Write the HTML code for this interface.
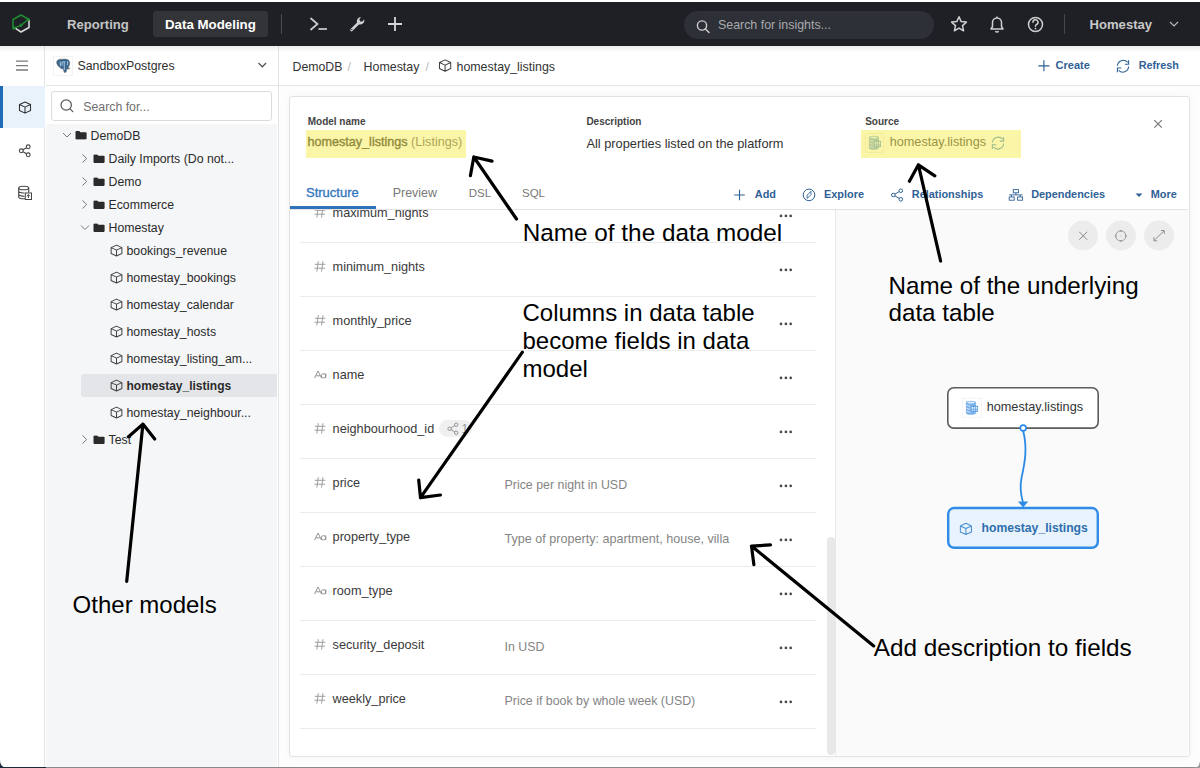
<!DOCTYPE html>
<html><head><meta charset="utf-8">
<style>
*{box-sizing:border-box;margin:0;padding:0}
html,body{width:1200px;height:768px;overflow:hidden;background:#fff;font-family:"Liberation Sans",sans-serif;color:#333;position:relative}
.a{position:absolute}
.t{position:absolute;white-space:nowrap;line-height:1}
svg{position:absolute;overflow:visible}
.b{font-weight:bold}
</style></head><body>
<svg style="left:0;top:0;width:0;height:0"><defs>
<symbol id="cube" viewBox="0 0 14 14"><path d="M7 1.2 L12.8 3.9 L12.8 10.2 L7 12.9 L1.2 10.2 L1.2 3.9 Z M1.2 3.9 L7 6.6 L12.8 3.9 M7 6.6 L7 12.9" fill="none" stroke="currentColor" stroke-width="1.1" stroke-linejoin="round"/></symbol>
<symbol id="folder" viewBox="0 0 12 9"><path d="M0.5 1.2 Q0.5 0.3 1.4 0.3 L4.3 0.3 L5.4 1.5 L10.8 1.5 Q11.6 1.5 11.6 2.3 L11.6 7.9 Q11.6 8.7 10.8 8.7 L1.3 8.7 Q0.5 8.7 0.5 7.9 Z" fill="#2b2b2b"/></symbol>
<symbol id="dbi" viewBox="0 0 20 20">
<path d="M3.9 4.4 Q3.9 2.7 8.9 2.7 Q13.9 2.7 13.9 4.4 L13.9 15 Q13.9 16.8 8.9 16.8 Q3.9 16.8 3.9 15 Z" fill="currentColor" opacity="0.8"/>
<ellipse cx="8.9" cy="4.5" rx="3.7" ry="1.05" fill="#fff" opacity="0.75"/>
<path d="M4.3 7.2 Q5.5 8.3 8.9 8.3 M4.3 10.1 Q5.5 11.2 8.6 11.2 M4.3 13 Q5.5 14.1 8.6 14.1" stroke="#fff" stroke-width="0.8" fill="none" opacity="0.8"/>
<rect x="8.6" y="7.8" width="7.4" height="6.2" fill="currentColor"/>
<g fill="#fff" opacity="0.9"><rect x="9.6" y="8.9" width="1.4" height="1.9"/><rect x="11.7" y="8.9" width="1.4" height="1.9"/><rect x="13.8" y="8.9" width="1.4" height="1.9"/>
<rect x="9.6" y="11.4" width="1.4" height="1.8" opacity="0.7"/><rect x="11.7" y="11.4" width="1.4" height="1.8" opacity="0.7"/><rect x="13.8" y="11.4" width="1.4" height="1.8" opacity="0.7"/></g>
</symbol>
</defs></svg>
<div class="a" style="left:0;top:2px;width:1200px;height:44px;background:#1e2025"></div>
<div class="a" style="left:153px;top:11px;width:115px;height:26px;background:#333437;border-radius:3px"></div>
<div class="t b" style="left:67px;top:18.00px;font-size:13.1px;color:#c4c4c4;">Reporting</div>
<div class="t b" style="left:165px;top:18.00px;font-size:13.3px;color:#fff;">Data Modeling</div>
<div class="t b" style="left:1089.5px;top:18.00px;font-size:13.1px;color:#c8c8c8;">Homestay</div>
<div class="a" style="left:281px;top:14px;width:1px;height:20px;background:#4a4c50"></div>
<svg style="left:0;top:0" width="45" height="46" viewBox="0 0 45 46">
<path d="M15.5 28 L13 26.5 L13 19.5 L21 15 L28.5 19.3" fill="none" stroke="#1f8a32" stroke-width="1.6" stroke-linejoin="round"/>
<path d="M15.5 28.3 L21 32 L29 27.5 L29 20" fill="none" stroke="#d8d8d8" stroke-width="1.6" stroke-linejoin="round"/>
<path d="M13.3 28.3 L21 25.3 L28.5 19.2" fill="none" stroke="#1f8a32" stroke-width="1.4"/>
<circle cx="13.5" cy="28.3" r="1.4" fill="#1f8a32"/><circle cx="21" cy="25.3" r="1.2" fill="none" stroke="#1f8a32" stroke-width="1"/><circle cx="28.3" cy="19.3" r="1.5" fill="#1f8a32"/>
</svg>
<svg style="left:0;top:0" width="1200" height="46">
<path d="M311 18.5 L317.5 24 L311 29.5" fill="none" stroke="#cfcfcf" stroke-width="1.7" stroke-linecap="round"/>
<path d="M318.5 29 L327 29" stroke="#cfcfcf" stroke-width="1.7"/>
<path d="M351.5 30 L358.5 23" stroke="#cfcfcf" stroke-width="2.6" stroke-linecap="round"/>
<path d="M357 22.5 A4.3 4.3 0 0 1 361 17 L359.3 19.6 L360.3 21.5 L362.4 21.6 L364.2 19.2 A4.3 4.3 0 0 1 358.6 24.3 Z" fill="#cfcfcf"/>
<circle cx="351.8" cy="29.6" r="0.7" fill="#1e2025"/>
<path d="M395 17 L395 31 M388 24 L402 24" stroke="#d6d6d6" stroke-width="1.8"/>
<rect x="684" y="11" width="250" height="28" rx="14" fill="#2d3037"/>
<circle cx="702" cy="25.5" r="4.6" fill="none" stroke="#d0d0d0" stroke-width="1.4"/>
<path d="M705.3 28.8 L709 32.5" stroke="#d0d0d0" stroke-width="1.4" stroke-linecap="round"/>
<path d="M959 16.8 L961.2 21.6 L966.4 22.1 L962.5 25.6 L963.6 30.8 L959 28.1 L954.4 30.8 L955.5 25.6 L951.6 22.1 L956.8 21.6 Z" fill="none" stroke="#cfcfcf" stroke-width="1.5" stroke-linejoin="round"/>
<path d="M991 29 L1003 29 L1001.5 26.5 L1001.5 22.5 A4.5 4.5 0 0 0 992.5 22.5 L992.5 26.5 Z" fill="none" stroke="#cfcfcf" stroke-width="1.5" stroke-linejoin="round"/>
<path d="M995.5 31 A1.6 1.6 0 0 0 998.5 31" fill="none" stroke="#cfcfcf" stroke-width="1.4"/>
<path d="M997 16.5 L997 18" stroke="#cfcfcf" stroke-width="1.4"/>
<circle cx="1035.5" cy="24.5" r="7" fill="none" stroke="#cfcfcf" stroke-width="1.5"/>
<path d="M1033 22.3 A2.5 2.5 0 1 1 1036.3 24.6 Q1035.5 25.2 1035.5 26.3" fill="none" stroke="#cfcfcf" stroke-width="1.5" stroke-linecap="round"/>
<circle cx="1035.5" cy="28.6" r="0.9" fill="#cfcfcf"/>
<path d="M1064.5 14 L1064.5 34" stroke="#44474c" stroke-width="1"/>
<path d="M1170 22 L1174 26 L1178 22" fill="none" stroke="#bdbdbd" stroke-width="1.1"/>
</svg>
<div class="t" style="left:718px;top:19.00px;font-size:12.4px;color:#a9abae;">Search for insights...</div>
<div class="a" style="left:0;top:46px;width:45px;height:721px;background:#fff;border-right:1px solid #e3e3e3"></div>
<div class="a" style="left:0;top:86px;width:45px;height:42px;background:#e9f1fb"></div>
<div class="a" style="left:0;top:86px;width:3px;height:42px;background:#1e6bb8"></div>
<svg style="left:0;top:0" width="45" height="210">
<path d="M16 61.2 L28 61.2 M16 65.6 L28 65.6 M16 70 L28 70" stroke="#7a7a7a" stroke-width="1.3"/>
<use href="#cube" x="18.3" y="100.8" width="13.4" height="13.4" color="#333"/>
<circle cx="28.2" cy="146.8" r="1.9" fill="none" stroke="#444" stroke-width="1.1"/>
<circle cx="21.3" cy="150.8" r="1.9" fill="none" stroke="#444" stroke-width="1.1"/>
<circle cx="28.2" cy="154.8" r="1.9" fill="none" stroke="#444" stroke-width="1.1"/>
<path d="M23 149.8 L26.5 147.8 M23 151.8 L26.5 153.8" stroke="#444" stroke-width="1.1"/>
<ellipse cx="23.7" cy="188" rx="5" ry="1.8" fill="none" stroke="#444" stroke-width="1.1"/>
<path d="M18.7 188 L18.7 197 Q18.7 198.8 23.7 198.8 L25 198.8 M28.7 188 L28.7 192.5 M18.7 191.2 Q19.5 193 24.5 193 M18.7 194.5 Q19.5 196.2 24.5 196.2" fill="none" stroke="#444" stroke-width="1.1"/>
<rect x="25.3" y="193" width="6.2" height="6.5" fill="#fff" stroke="#444" stroke-width="1"/>
<path d="M28.4 198 L28.4 194.8 M27 196.2 L28.4 194.6 L29.8 196.2" fill="none" stroke="#444" stroke-width="1"/>
</svg>
<div class="a" style="left:45px;top:46px;width:234px;height:721px;background:#fff;border-right:1px solid #e3e3e3"></div>
<div class="a" style="left:46px;top:85px;width:232px;height:1px;background:#e6e6e6"></div>
<div class="a" style="left:51px;top:91px;width:221px;height:30px;border:1px solid #dcdcdc;border-radius:3px;background:#fff"></div>
<div class="a" style="left:46px;top:124px;width:231px;height:643px;background:#f5f6f8"></div>
<div class="a" style="left:53px;top:56px;width:20px;height:20px;border:1px solid #f3f3f3;background:#fff"></div>
<svg style="left:53px;top:56px" width="20" height="20" viewBox="0 0 20 20">
<path d="M5 4 Q6.5 2.8 9.5 3.3 Q12.5 2.6 15.5 4 Q17.3 5.5 16.5 8.5 Q16 10.5 15 11.5 L16.8 12.3 Q15.5 13.5 13.8 12.8 Q13.8 15.5 12.5 16.5 Q11 17 10.8 15 L10.3 13 Q8 13 7 11.5 Q5 10.5 4 8 Q3 5 5 4 Z" fill="#336791" stroke="#6a6a6a" stroke-width="0.6"/>
<path d="M7.2 5.5 L7.6 10.3 M9 6 L9.2 9.5 M9.3 6 Q11 5.6 12.5 6.2 M11.2 6.2 L11.3 14 M14.6 5.2 Q15 7.5 14.2 9.2" stroke="#dfe9f3" stroke-width="0.75" fill="none"/>
</svg>
<div class="t" style="left:77.5px;top:60.00px;font-size:12.3px;color:#2e2e2e;">SandboxPostgres</div>
<div class="t" style="left:83.3px;top:101.00px;font-size:12.3px;color:#6e6e6e;">Search for...</div>
<svg style="left:0;top:0" width="280" height="130">
<path d="M258.5 63 L262.3 66.8 L266.1 63" fill="none" stroke="#555" stroke-width="1.3"/>
<circle cx="66.2" cy="105" r="5.2" fill="none" stroke="#555" stroke-width="1.2"/>
<path d="M70 108.8 L72.8 111.6" stroke="#555" stroke-width="1.2" stroke-linecap="round"/>
</svg>
<div class="a" style="left:81px;top:374px;width:196px;height:23px;background:#e4e5e9;border-radius:3px 0 0 3px"></div>
<div class="t" style="left:90.5px;top:130.00px;font-size:12.3px;color:#2b2b2b;">DemoDB</div>
<div class="t" style="left:108.5px;top:153.00px;font-size:12.3px;color:#2b2b2b;">Daily Imports (Do not...</div>
<div class="t" style="left:108.5px;top:176.00px;font-size:12.3px;color:#2b2b2b;">Demo</div>
<div class="t" style="left:108.5px;top:199.00px;font-size:12.3px;color:#2b2b2b;">Ecommerce</div>
<div class="t" style="left:108.5px;top:222.00px;font-size:12.3px;color:#2b2b2b;">Homestay</div>
<div class="t" style="left:108.5px;top:434.00px;font-size:12.3px;color:#2b2b2b;">Test</div>
<div class="t" style="left:126.5px;top:245.00px;font-size:12.3px;color:#2b2b2b;">bookings_revenue</div>
<div class="t" style="left:126.5px;top:272.00px;font-size:12.3px;color:#2b2b2b;">homestay_bookings</div>
<div class="t" style="left:126.5px;top:299.00px;font-size:12.3px;color:#2b2b2b;">homestay_calendar</div>
<div class="t" style="left:126.5px;top:326.00px;font-size:12.3px;color:#2b2b2b;">homestay_hosts</div>
<div class="t" style="left:126.5px;top:353.00px;font-size:12.3px;color:#2b2b2b;">homestay_listing_am...</div>
<div class="t" style="left:126.5px;top:380.00px;font-size:12px;color:#2b2b2b;font-weight:bold">homestay_listings</div>
<div class="t" style="left:126.5px;top:407.00px;font-size:12.3px;color:#2b2b2b;">homestay_neighbour...</div>
<svg style="left:0;top:0" width="280" height="460">
<path d="M63 133 L67 137 L71 133" fill="none" stroke="#777" stroke-width="1"/>
<use href="#folder" x="75" y="130.7" width="12" height="9"/>
<path d="M82.5 154.5 L86.7 158.5 L82.5 162.5" fill="none" stroke="#777" stroke-width="1"/>
<use href="#folder" x="93" y="154.2" width="12" height="9"/>
<path d="M82.5 177.5 L86.7 181.5 L82.5 185.5" fill="none" stroke="#777" stroke-width="1"/>
<use href="#folder" x="93" y="177.2" width="12" height="9"/>
<path d="M82.5 200.5 L86.7 204.5 L82.5 208.5" fill="none" stroke="#777" stroke-width="1"/>
<use href="#folder" x="93" y="200.2" width="12" height="9"/>
<path d="M81 225.5 L85 229.5 L89 225.5" fill="none" stroke="#777" stroke-width="1"/>
<use href="#folder" x="93" y="223.2" width="12" height="9"/>
<path d="M82.5 435.5 L86.7 439.5 L82.5 443.5" fill="none" stroke="#777" stroke-width="1"/>
<use href="#folder" x="93" y="435.2" width="12" height="9"/>
<use href="#cube" x="110" y="244.0" width="13" height="13" color="#444"/>
<use href="#cube" x="110" y="271.0" width="13" height="13" color="#444"/>
<use href="#cube" x="110" y="298.0" width="13" height="13" color="#444"/>
<use href="#cube" x="110" y="325.0" width="13" height="13" color="#444"/>
<use href="#cube" x="110" y="352.0" width="13" height="13" color="#444"/>
<use href="#cube" x="110" y="379.0" width="13" height="13" color="#444"/>
<use href="#cube" x="110" y="406.0" width="13" height="13" color="#444"/>
</svg>
<div class="a" style="left:279px;top:46px;width:921px;height:721px;background:#fdfdfd"></div>
<div class="a" style="left:279px;top:46px;width:921px;height:40px;background:#fff;border-bottom:1px solid #e6e6e6"></div>
<div class="a" style="left:289px;top:96px;width:901px;height:661px;background:#fff;border:1px solid #e3e3e3;border-radius:3px;box-shadow:0 0 8px rgba(0,0,0,.035)"></div>
<div class="t" style="left:292.5px;top:61.00px;font-size:12.3px;color:#333;">DemoDB</div>
<div class="t" style="left:347.5px;top:61.00px;font-size:12.4px;color:#bbb;">/</div>
<div class="t" style="left:363.6px;top:61.00px;font-size:12.4px;color:#333;">Homestay</div>
<div class="t" style="left:425.5px;top:61.00px;font-size:12.4px;color:#bbb;">/</div>
<div class="t" style="left:456.5px;top:61.00px;font-size:12.4px;color:#333;">homestay_listings</div>
<div class="t b" style="left:1055.6px;top:60.00px;font-size:11px;color:#2f6196;">Create</div>
<div class="t b" style="left:1138.7px;top:60.00px;font-size:10.8px;color:#2f6196;">Refresh</div>
<svg style="left:0;top:0" width="1200" height="90">
<use href="#cube" x="438.3" y="58.7" width="13.6" height="13.6" color="#444"/>
<path d="M1043.9 60.3 L1043.9 71.3 M1038.3 65.8 L1049.5 65.8" stroke="#2f6196" stroke-width="1.15"/>
<path d="M1117.4 65.8 A5.8 5.8 0 0 1 1127.6 62.4 M1128.6 66.6 A5.8 5.8 0 0 1 1118.6 70.4" fill="none" stroke="#2f6196" stroke-width="1.1"/>
<path d="M1128.6 60.2 L1128.6 64.3 L1124.8 64.3 M1117.4 72.2 L1117.4 68 L1121.3 68" fill="none" stroke="#2f6196" stroke-width="1.1"/>
</svg>
<div class="t b" style="left:307.7px;top:117.00px;font-size:10px;color:#444;">Model name</div>
<div class="t b" style="left:586.4px;top:117.00px;font-size:10px;color:#444;">Description</div>
<div class="t b" style="left:865.2px;top:117.00px;font-size:10px;color:#444;">Source</div>
<div class="t" style="left:307.5px;top:136.00px;font-size:12.6px;color:#333;"><span style="-webkit-text-stroke:0.4px #333">homestay_listings</span> <span style="color:#666">(Listings)</span></div>
<div class="t" style="left:586.4px;top:138.00px;font-size:12.8px;color:#333;">All properties listed on the platform</div>
<div class="a" style="left:865px;top:133px;width:19px;height:20px;border:1px solid #eee;border-radius:2px;background:#fff"></div>
<div class="t" style="left:889.7px;top:136.00px;font-size:12.7px;color:#444;">homestay.listings</div>
<svg style="left:0;top:0" width="1200" height="220">
<use href="#dbi" x="865" y="133" width="20" height="20" color="#5a9ad8"/>
<path d="M992.4 142.6 A5.8 5.8 0 0 1 1002.6 139.2 M1003.6 143.4 A5.8 5.8 0 0 1 993.6 147.2" fill="none" stroke="#4a92c8" stroke-width="1.1"/>
<path d="M1003.6 137 L1003.6 141.1 L999.8 141.1 M992.4 149 L992.4 144.8 L996.3 144.8" fill="none" stroke="#4a92c8" stroke-width="1.1"/>
<path d="M1154.3 120.2 L1161.8 127.7 M1161.8 120.2 L1154.3 127.7" stroke="#777" stroke-width="1.2"/>
</svg>
<div class="a" style="left:290px;top:209px;width:898px;height:1px;background:#e4e4e4"></div>
<div class="a" style="left:290px;top:206px;width:86px;height:3px;background:#2f72b9"></div>
<div class="t" style="left:306px;top:186.00px;font-size:13px;color:#3577bf;-webkit-text-stroke:0.35px #3577bf">Structure</div>
<div class="t" style="left:392.8px;top:187.00px;font-size:12.4px;color:#777;">Preview</div>
<div class="t" style="left:468.7px;top:188.00px;font-size:11.5px;color:#777;">DSL</div>
<div class="t" style="left:522px;top:188.00px;font-size:11.5px;color:#777;">SQL</div>
<div class="t b" style="left:754.8px;top:189.00px;font-size:10.9px;color:#2f6196;">Add</div>
<div class="t b" style="left:824px;top:189.00px;font-size:10.9px;color:#2f6196;">Explore</div>
<div class="t b" style="left:911.8px;top:189.00px;font-size:10.9px;color:#2f6196;">Relationships</div>
<div class="t b" style="left:1031.2px;top:189.00px;font-size:10.9px;color:#2f6196;">Dependencies</div>
<div class="t b" style="left:1150.8px;top:189.00px;font-size:10.9px;color:#2f6196;">More</div>
<svg style="left:0;top:0" width="1200" height="220">
<path d="M739.5 189.8 L739.5 200.3 M734.2 195 L744.8 195" stroke="#2f6196" stroke-width="1.1"/>
<circle cx="809" cy="194.9" r="5.8" fill="none" stroke="#2f6196" stroke-width="1"/>
<path d="M810.9 191.3 L811 194.6 L807.3 198.4 L807.1 195.2 Z" fill="none" stroke="#2f6196" stroke-width="0.9" stroke-linejoin="round"/>
<circle cx="900.8" cy="190.7" r="1.8" fill="none" stroke="#2f6196" stroke-width="1"/>
<circle cx="893.3" cy="195" r="1.8" fill="none" stroke="#2f6196" stroke-width="1"/>
<circle cx="900.8" cy="199.3" r="1.8" fill="none" stroke="#2f6196" stroke-width="1"/>
<path d="M895 194 L899 191.8 M895 196 L899 198.2" stroke="#2f6196" stroke-width="1"/>
<g fill="none" stroke="#2f6196" stroke-width="0.9">
<rect x="1013.3" y="189.6" width="5.2" height="3.2"/>
<path d="M1015.9 192.8 L1015.9 194.9 M1009 194.9 L1022.6 194.9 M1011.5 194.9 L1011.5 197 M1020.2 194.9 L1020.2 197"/>
<rect x="1009.2" y="197" width="5" height="3.2"/><rect x="1017.6" y="197" width="5" height="3.2"/>
</g>
<path d="M1135.5 193.5 L1142.5 193.5 L1139 197 Z" fill="#2f6196"/>
</svg>
<div class="a" style="left:0;top:210px;width:1200px;height:546px;overflow:hidden"><div class="a" style="left:0;top:-210px;width:1200px;height:768px">
<div class="a" style="left:300px;top:242px;width:516px;height:1px;background:#ebebeb"></div>
<div class="t" style="left:332.6px;top:207.00px;font-size:12.7px;color:#3a3a3a;">maximum_nights</div>
<div class="a" style="left:300px;top:296px;width:516px;height:1px;background:#ebebeb"></div>
<div class="t" style="left:332.6px;top:261.00px;font-size:12.7px;color:#3a3a3a;">minimum_nights</div>
<div class="a" style="left:300px;top:350px;width:516px;height:1px;background:#ebebeb"></div>
<div class="t" style="left:332.6px;top:315.00px;font-size:12.7px;color:#3a3a3a;">monthly_price</div>
<div class="a" style="left:300px;top:404px;width:516px;height:1px;background:#ebebeb"></div>
<div class="t" style="left:332.6px;top:369.00px;font-size:12.7px;color:#3a3a3a;">name</div>
<div class="a" style="left:300px;top:458px;width:516px;height:1px;background:#ebebeb"></div>
<div class="t" style="left:332.6px;top:423.00px;font-size:12.7px;color:#3a3a3a;">neighbourhood_id</div>
<div class="a" style="left:300px;top:512px;width:516px;height:1px;background:#ebebeb"></div>
<div class="t" style="left:332.6px;top:477.00px;font-size:12.7px;color:#3a3a3a;">price</div>
<div class="t" style="left:504.5px;top:479.00px;font-size:12.4px;color:#858585;">Price per night in USD</div>
<div class="a" style="left:300px;top:566px;width:516px;height:1px;background:#ebebeb"></div>
<div class="t" style="left:332.6px;top:531.00px;font-size:12.7px;color:#3a3a3a;">property_type</div>
<div class="t" style="left:504.5px;top:533.00px;font-size:12.6px;color:#858585;">Type of property: apartment, house, villa</div>
<div class="a" style="left:300px;top:620px;width:516px;height:1px;background:#ebebeb"></div>
<div class="t" style="left:332.6px;top:585.00px;font-size:12.7px;color:#3a3a3a;">room_type</div>
<div class="a" style="left:300px;top:674px;width:516px;height:1px;background:#ebebeb"></div>
<div class="t" style="left:332.6px;top:639.00px;font-size:12.7px;color:#3a3a3a;">security_deposit</div>
<div class="t" style="left:504.5px;top:641.00px;font-size:12.4px;color:#858585;">In USD</div>
<div class="a" style="left:300px;top:728px;width:516px;height:1px;background:#ebebeb"></div>
<div class="t" style="left:332.6px;top:693.00px;font-size:12.7px;color:#3a3a3a;">weekly_price</div>
<div class="t" style="left:504.5px;top:695.00px;font-size:12.4px;color:#858585;">Price if book by whole week (USD)</div>
<div class="a" style="left:439.3px;top:420.2px;width:33.2px;height:17.3px;background:#f0f0f0;border-radius:8.6px"></div>
<div class="t" style="left:461.5px;top:423.00px;font-size:12px;color:#999;">1</div>
<svg style="left:0;top:0" width="1200" height="768">
<path d="M318.3 207.20000000000002 L316.8 217.60000000000002 M323 207.20000000000002 L321.5 217.60000000000002 M314.8 210.3 L325.4 210.3 M314.6 214.20000000000002 L325 214.20000000000002" stroke="#9a9a9a" stroke-width="0.95" fill="none"/>
<circle cx="781" cy="215.9" r="1.35" fill="#4a4a4a"/>
<circle cx="785.9" cy="215.9" r="1.35" fill="#4a4a4a"/>
<circle cx="790.7" cy="215.9" r="1.35" fill="#4a4a4a"/>
<path d="M318.3 261.2 L316.8 271.6 M323 261.2 L321.5 271.6 M314.8 264.3 L325.4 264.3 M314.6 268.2 L325 268.2" stroke="#9a9a9a" stroke-width="0.95" fill="none"/>
<circle cx="781" cy="269.90000000000003" r="1.35" fill="#4a4a4a"/>
<circle cx="785.9" cy="269.90000000000003" r="1.35" fill="#4a4a4a"/>
<circle cx="790.7" cy="269.90000000000003" r="1.35" fill="#4a4a4a"/>
<path d="M318.3 315.2 L316.8 325.6 M323 315.2 L321.5 325.6 M314.8 318.3 L325.4 318.3 M314.6 322.2 L325 322.2" stroke="#9a9a9a" stroke-width="0.95" fill="none"/>
<circle cx="781" cy="323.90000000000003" r="1.35" fill="#4a4a4a"/>
<circle cx="785.9" cy="323.90000000000003" r="1.35" fill="#4a4a4a"/>
<circle cx="790.7" cy="323.90000000000003" r="1.35" fill="#4a4a4a"/>
<path d="M314.5 378.1 L318 371.0 L321.5 378.1 M315.8 375.8 L320.2 375.8" stroke="#8a8a8a" stroke-width="0.9" fill="none"/>
<circle cx="323.5" cy="375.8" r="2.2" fill="none" stroke="#8a8a8a" stroke-width="0.9"/><path d="M325.8 373.3 L325.8 378.1" stroke="#8a8a8a" stroke-width="0.9"/>
<circle cx="781" cy="377.90000000000003" r="1.35" fill="#4a4a4a"/>
<circle cx="785.9" cy="377.90000000000003" r="1.35" fill="#4a4a4a"/>
<circle cx="790.7" cy="377.90000000000003" r="1.35" fill="#4a4a4a"/>
<path d="M318.3 423.2 L316.8 433.6 M323 423.2 L321.5 433.6 M314.8 426.3 L325.4 426.3 M314.6 430.2 L325 430.2" stroke="#9a9a9a" stroke-width="0.95" fill="none"/>
<circle cx="781" cy="431.90000000000003" r="1.35" fill="#4a4a4a"/>
<circle cx="785.9" cy="431.90000000000003" r="1.35" fill="#4a4a4a"/>
<circle cx="790.7" cy="431.90000000000003" r="1.35" fill="#4a4a4a"/>
<path d="M318.3 477.2 L316.8 487.6 M323 477.2 L321.5 487.6 M314.8 480.3 L325.4 480.3 M314.6 484.2 L325 484.2" stroke="#9a9a9a" stroke-width="0.95" fill="none"/>
<circle cx="781" cy="485.90000000000003" r="1.35" fill="#4a4a4a"/>
<circle cx="785.9" cy="485.90000000000003" r="1.35" fill="#4a4a4a"/>
<circle cx="790.7" cy="485.90000000000003" r="1.35" fill="#4a4a4a"/>
<path d="M314.5 540.0999999999999 L318 533.0 L321.5 540.0999999999999 M315.8 537.8 L320.2 537.8" stroke="#8a8a8a" stroke-width="0.9" fill="none"/>
<circle cx="323.5" cy="537.8" r="2.2" fill="none" stroke="#8a8a8a" stroke-width="0.9"/><path d="M325.8 535.3 L325.8 540.0999999999999" stroke="#8a8a8a" stroke-width="0.9"/>
<circle cx="781" cy="539.9" r="1.35" fill="#4a4a4a"/>
<circle cx="785.9" cy="539.9" r="1.35" fill="#4a4a4a"/>
<circle cx="790.7" cy="539.9" r="1.35" fill="#4a4a4a"/>
<path d="M314.5 594.0999999999999 L318 587.0 L321.5 594.0999999999999 M315.8 591.8 L320.2 591.8" stroke="#8a8a8a" stroke-width="0.9" fill="none"/>
<circle cx="323.5" cy="591.8" r="2.2" fill="none" stroke="#8a8a8a" stroke-width="0.9"/><path d="M325.8 589.3 L325.8 594.0999999999999" stroke="#8a8a8a" stroke-width="0.9"/>
<circle cx="781" cy="593.9" r="1.35" fill="#4a4a4a"/>
<circle cx="785.9" cy="593.9" r="1.35" fill="#4a4a4a"/>
<circle cx="790.7" cy="593.9" r="1.35" fill="#4a4a4a"/>
<path d="M318.3 639.1999999999999 L316.8 649.5999999999999 M323 639.1999999999999 L321.5 649.5999999999999 M314.8 642.3 L325.4 642.3 M314.6 646.1999999999999 L325 646.1999999999999" stroke="#9a9a9a" stroke-width="0.95" fill="none"/>
<circle cx="781" cy="647.9" r="1.35" fill="#4a4a4a"/>
<circle cx="785.9" cy="647.9" r="1.35" fill="#4a4a4a"/>
<circle cx="790.7" cy="647.9" r="1.35" fill="#4a4a4a"/>
<path d="M318.3 693.1999999999999 L316.8 703.5999999999999 M323 693.1999999999999 L321.5 703.5999999999999 M314.8 696.3 L325.4 696.3 M314.6 700.1999999999999 L325 700.1999999999999" stroke="#9a9a9a" stroke-width="0.95" fill="none"/>
<circle cx="781" cy="701.9" r="1.35" fill="#4a4a4a"/>
<circle cx="785.9" cy="701.9" r="1.35" fill="#4a4a4a"/>
<circle cx="790.7" cy="701.9" r="1.35" fill="#4a4a4a"/>
<g fill="none" stroke="#888" stroke-width="0.9"><circle cx="456.2" cy="424.8" r="1.7"/><circle cx="449.6" cy="428.8" r="1.7"/><circle cx="456.2" cy="432.8" r="1.7"/><path d="M451.1 427.9 L454.7 425.7 M451.1 429.7 L454.7 431.9"/></g>
</svg>
</div></div>
<div class="a" style="left:827px;top:537px;width:7.5px;height:218px;background:#e8e8e8;border-radius:4px"></div>
<div class="a" style="left:835px;top:210px;width:1px;height:546px;background:#e8e8e8"></div>
<div class="a" style="left:836px;top:210px;width:352px;height:546px;background:#fafafa"></div>
<svg style="left:0;top:0" width="1200" height="768">
<circle cx="1083" cy="235.5" r="15" fill="#ececec"/>
<circle cx="1121" cy="235.5" r="15" fill="#ececec"/>
<circle cx="1159" cy="235.5" r="15" fill="#ececec"/>
<path d="M1079.2 231.8 L1087.2 239.8 M1087.2 231.8 L1079.2 239.8" stroke="#8a8a8a" stroke-width="1"/>
<circle cx="1120.8" cy="235.9" r="5.1" fill="none" stroke="#9a9a9a" stroke-width="1"/>
<path d="M1120.8 230 L1120.8 231.8 M1120.8 240 L1120.8 241.8 M1114.9 235.9 L1116.7 235.9 M1124.9 235.9 L1126.7 235.9" stroke="#9a9a9a" stroke-width="1.5"/>
<circle cx="1121" cy="235.8" r="0.6" fill="#bbb"/>
<path d="M1154.2 240.4 L1164 230.8 M1153.9 237.3 L1153.9 240.8 L1157.2 240.8 M1161 230.5 L1164.3 230.5 L1164.3 233.8" fill="none" stroke="#8f8f8f" stroke-width="1"/>
<rect x="947.8" y="387.8" width="150.4" height="40.3" rx="6" fill="#fff" stroke="#5c5c5c" stroke-width="1.6"/>
<rect x="962.5" y="398.3" width="19" height="19" fill="#fff" stroke="#f4f4f4" stroke-width="1"/>
<use href="#dbi" x="962" y="398" width="20" height="20" color="#5a9ee6"/>
<path d="M1023.2 431 C1027.5 448, 1025 462, 1021.5 478 C1019.5 488, 1021.5 497, 1022.9 502" fill="none" stroke="#2b8ae6" stroke-width="1.8"/>
<circle cx="1023.2" cy="428" r="2.9" fill="#fff" stroke="#2b8ae6" stroke-width="1.6"/>
<path d="M1018 501.5 L1028.3 501.5 L1023.1 507.5 Z" fill="#2b8ae6"/>
<rect x="948.2" y="508" width="149.6" height="39.8" rx="6" fill="#e8f3fd" stroke="#2e8be6" stroke-width="2.4"/>
<use href="#cube" x="959.2" y="522.2" width="13.4" height="13.4" color="#4a8fd0"/>
</svg>
<div class="t" style="left:986.7px;top:401.00px;font-size:12.7px;color:#333;">homestay.listings</div>
<div class="t b" style="left:981.5px;top:522.00px;font-size:12.2px;color:#2f6fae;">homestay_listings</div>
<div class="a" style="left:0;top:46px;width:1200px;height:6px;background:linear-gradient(rgba(0,0,0,0.07),rgba(0,0,0,0))"></div>
<div class="a" style="left:306.2px;top:130px;width:159.8px;height:27.7px;background:rgba(246,234,73,0.48)"></div>
<div class="a" style="left:861.2px;top:130px;width:159.8px;height:28px;background:rgba(246,234,73,0.48)"></div>
<div class="t" style="left:522.8px;top:221.00px;font-size:24.3px;color:#000;">Name of the data model</div>
<div class="t" style="left:522.5px;top:301.00px;font-size:24px;color:#000;">Columns in data table</div>
<div class="t" style="left:522.5px;top:329.00px;font-size:24px;color:#000;">become fields in data</div>
<div class="t" style="left:522.5px;top:357.00px;font-size:24px;color:#000;">model</div>
<div class="t" style="left:888.5px;top:274.00px;font-size:24.2px;color:#000;">Name of the underlying</div>
<div class="t" style="left:888.5px;top:301.00px;font-size:24.2px;color:#000;">data table</div>
<div class="t" style="left:873.8px;top:636.00px;font-size:24.3px;color:#000;">Add description to fields</div>
<div class="t" style="left:72.6px;top:593.00px;font-size:24px;color:#000;">Other models</div>
<svg style="left:0;top:0" width="1200" height="768">
<g fill="none" stroke="#000" stroke-width="3.2" stroke-linecap="round" stroke-linejoin="round">
<path d="M516.5 219 L473.8 157 M492 161.1 L473.8 157 L470.4 175.7"/>
<path d="M940.6 261 L918.4 164.8 M909.4 181.2 L918.4 164.8 L934.8 175.8"/>
<path d="M522.4 352.2 L420.5 497.7 M418.7 480 L420.5 497.7 L440.4 495"/>
<path d="M126.7 581.4 L142.9 424.1 M128.5 436.7 L142.9 424.1 L154.7 439"/>
<path d="M873.7 645.9 L751.5 546.1 M770.5 544.9 L751.5 546.1 L753.9 564.7"/>
</g>
</svg>
<div class="a" style="left:0;top:767px;width:46px;height:1px;background:#1b2a3a"></div>
<div class="a" style="left:46px;top:767px;width:1154px;height:1px;background:#8a8a8a"></div>
<svg style="left:0;top:0" width="1200" height="768"><path d="M1194 767.6 Q1199.6 767.6 1199.6 762 L1200 762 L1200 768 L1194 768 Z" fill="#9a9a9a"/><path d="M0 760 Q0 767 6 767.5 L0 768 Z" fill="#1b2a3a"/></svg>
</body></html>
